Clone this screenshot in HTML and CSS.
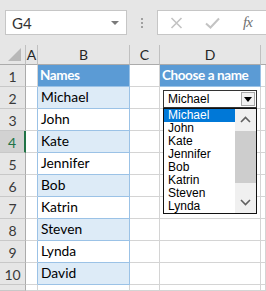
FILE: index.html
```html
<!DOCTYPE html>
<html>
<head>
<title>Choose a name</title>
<link rel="stylesheet" href="styles.css">
</head>
<body>
<div class="toolbar">
	<div class="namebox"><span>G4</span><span class="caret"></span></div>
	<div class="grip"><i></i><i></i><i></i></div>
	<div class="fbar">
		<svg class="ico_x" width="13" height="12" viewBox="0 0 13 12"><path d="M1.5 1 L11.5 11 M11.5 1 L1.5 11" stroke="#c3c3c3" stroke-width="1.6" fill="none"/></svg>
		<svg class="ico_ok" width="15" height="12" viewBox="0 0 15 12"><path d="M1 6.5 L5.5 10.5 L14 1.5" stroke="#c3c3c3" stroke-width="2" fill="none"/></svg>
		<span class="fx">fx</span>
	</div>
</div>

<div class="sheet">
	<div class="hd corner"><span class="tri"></span></div>
	<div class="hd col">A</div>
	<div class="hd col">B</div>
	<div class="hd col">C</div>
	<div class="hd col">D</div>
	<div class="hd col last"></div>

	<div class="hd row">1</div>
	<div class="c"></div>
	<div class="c th">Names</div>
	<div class="c"></div>
	<div class="c th">Choose a name</div>
	<div class="c"></div>

	<div class="hd row">2</div>
	<div class="c ta"></div>
	<div class="c tb even">Michael</div>
	<div class="c"></div>
	<div class="c"></div>
	<div class="c"></div>

	<div class="hd row">3</div>
	<div class="c ta"></div>
	<div class="c tb">John</div>
	<div class="c"></div>
	<div class="c"></div>
	<div class="c"></div>

	<div class="hd row sel">4</div>
	<div class="c ta"></div>
	<div class="c tb even">Kate</div>
	<div class="c"></div>
	<div class="c"></div>
	<div class="c"></div>

	<div class="hd row">5</div>
	<div class="c ta"></div>
	<div class="c tb">Jennifer</div>
	<div class="c"></div>
	<div class="c"></div>
	<div class="c"></div>

	<div class="hd row">6</div>
	<div class="c ta"></div>
	<div class="c tb even">Bob</div>
	<div class="c"></div>
	<div class="c"></div>
	<div class="c"></div>

	<div class="hd row">7</div>
	<div class="c ta"></div>
	<div class="c tb">Katrin</div>
	<div class="c"></div>
	<div class="c"></div>
	<div class="c"></div>

	<div class="hd row">8</div>
	<div class="c ta"></div>
	<div class="c tb even">Steven</div>
	<div class="c"></div>
	<div class="c"></div>
	<div class="c"></div>

	<div class="hd row">9</div>
	<div class="c ta"></div>
	<div class="c tb">Lynda</div>
	<div class="c"></div>
	<div class="c"></div>
	<div class="c"></div>

	<div class="hd row">10</div>
	<div class="c ta"></div>
	<div class="c tb even">David</div>
	<div class="c"></div>
	<div class="c"></div>
	<div class="c"></div>

	<!-- row 11, only its top shows -->
	<div class="hd row"></div>
	<div class="c"></div>
	<div class="c"></div>
	<div class="c"></div>
	<div class="c"></div>
	<div class="c"></div>
</div>

<!-- data validation dropdown, open -->
<div class="combo">
	<span class="combo_txt">Michael</span>
	<span class="combo_btn"><span class="combo_tri"></span></span>
</div>
<div class="dd_list">
	<div class="dd_items">
		<div class="dd_item picked">Michael</div>
		<div class="dd_item">John</div>
		<div class="dd_item">Kate</div>
		<div class="dd_item">Jennifer</div>
		<div class="dd_item">Bob</div>
		<div class="dd_item">Katrin</div>
		<div class="dd_item">Steven</div>
		<div class="dd_item">Lynda</div>
	</div>
	<div class="dd_scroll">
		<div class="sb_btn"><svg width="11" height="7" viewBox="0 0 11 7"><path d="M1 6 L5.5 1.5 L10 6" stroke="#606060" stroke-width="1.6" fill="none"/></svg></div>
		<div class="sb_thumb"></div>
		<div class="sb_track"></div>
		<div class="sb_btn"><svg width="11" height="7" viewBox="0 0 11 7"><path d="M1 1 L5.5 5.5 L10 1" stroke="#606060" stroke-width="1.6" fill="none"/></svg></div>
	</div>
</div>
</body>
</html>
```

FILE: styles.css
```css
body {
	margin: 0;
	width: 266px;
	height: 291px;
	overflow: hidden;
	background: #ffffff;
	position: relative;
	font-family: Lato, "Liberation Sans", sans-serif;
	color: #000000;
}

/* name box + formula bar */
.toolbar {
	height: 45px;
	box-sizing: border-box;
	padding-top: 10px;
	background: #e6e6e6;
	display: flex;
	align-items: flex-start;
}

.namebox {
	margin-left: 5px;
	width: 122px;
	height: 25px;
	box-sizing: border-box;
	background: #ffffff;
	border: 1px solid #c6c6c6;
	display: flex;
	align-items: center;
	justify-content: space-between;
	padding: 0 7px 0 6px;
	font-size: 15px;
	color: #333333;
}

.caret {
	width: 0;
	height: 0;
	border-left: 4px solid transparent;
	border-right: 4px solid transparent;
	border-top: 4px solid #7a7a7a;
}

.grip {
	width: 30px;
	height: 25px;
	display: flex;
	flex-direction: column;
	align-items: center;
	justify-content: center;
	gap: 2px;
}

.grip i {
	display: block;
	width: 2px;
	height: 2px;
	background: #a0a0a0;
}

.fbar {
	flex: 1;
	height: 25px;
	box-sizing: border-box;
	background: #ffffff;
	border: 1px solid #c6c6c6;
	border-right: 0;
	display: flex;
	align-items: center;
}

.ico_x { margin-left: 12px; }
.ico_ok { margin-left: 22px; }

.fx {
	margin-left: 23px;
	font-family: "Liberation Serif", serif;
	font-style: italic;
	font-size: 15px;
	color: #707070;
	letter-spacing: -1px;
}

/* grid */
.sheet {
	display: grid;
	grid-template-columns: 26px 12px 92px 30px 101px 1fr;
	grid-template-rows: 20px repeat(10, 22px) 6px;
	height: 246px;
	overflow: hidden;
}

.sheet > div {
	box-sizing: border-box;
	border-right: 1px solid #d4d4d4;
	border-bottom: 1px solid #d4d4d4;
}

.hd {
	background: #e6e6e6;
	color: #262626;
	font-size: 14px;
	display: flex;
	align-items: center;
	justify-content: center;
}

.sheet > .col,
.sheet > .corner {
	border-right-color: #c0c0c0;
	border-bottom-color: #ababab;
}

.sheet > .col.last { border-right: 0; }

.sheet > .row {
	border-right-color: #ababab;
	border-bottom-color: #c8c8c8;
	color: #3a3a3a;
	padding-top: 2px;
}

.sheet > .row.sel {
	background: #d2d2d2;
	color: #217346;
	border-right: 2px solid #217346;
}

.corner {
	position: relative;
}

.tri {
	position: absolute;
	right: 4px;
	bottom: 3px;
	width: 0;
	height: 0;
	border-left: 13px solid transparent;
	border-bottom: 13px solid #b8b8b8;
}

.c {
	font-size: 13.8px;
	display: flex;
	align-items: flex-end;
	padding: 0 0 2px 3px;
	line-height: 18px;
	white-space: nowrap;
}

.sheet > .th {
	background: #5b9bd5;
	color: #ffffff;
	font-weight: bold;
	font-size: 13.5px;
	letter-spacing: -0.4px;
	border-right-color: #9bc2e6;
	border-bottom-color: #9bc2e6;
	padding-left: 2px;
}

.sheet > .ta { border-right-color: #9bc2e6; }

.sheet > .tb {
	border-right-color: #9bc2e6;
	border-bottom-color: #9bc2e6;
}

.sheet > .tb.even { background: #ddebf7; }

/* dropdown */
.combo {
	position: absolute;
	left: 163px;
	top: 90px;
	width: 94px;
	height: 18px;
	box-sizing: border-box;
	border: 1px solid #333333;
	background: #ffffff;
	display: flex;
	align-items: center;
	font-family: "Liberation Sans", sans-serif;
	font-size: 12px;
}

.combo_txt {
	flex: 1;
	padding-left: 4px;
}

.combo_btn {
	width: 14px;
	height: 14px;
	margin-right: 1px;
	box-sizing: border-box;
	border: 1px solid #a8a8a8;
	background: #f2f2f2;
	display: flex;
	align-items: center;
	justify-content: center;
}

.combo_tri {
	width: 0;
	height: 0;
	border-left: 4px solid transparent;
	border-right: 4px solid transparent;
	border-top: 5px solid #000000;
}

.dd_list {
	position: absolute;
	left: 163px;
	top: 108px;
	width: 94px;
	height: 106px;
	box-sizing: border-box;
	border: 1px solid #111111;
	background: #ffffff;
	display: flex;
}

.dd_items {
	flex: 1;
	font-family: "Liberation Sans", sans-serif;
	font-size: 12px;
	line-height: 13px;
}

.dd_item {
	padding-left: 4px;
	height: 13px;
	color: #000000;
}

.dd_item.picked {
	background: #0078d7;
	color: #ffffff;
}

.dd_scroll {
	width: 21px;
	background: #f0f0f0;
	display: flex;
	flex-direction: column;
}

.sb_btn {
	height: 21px;
	display: flex;
	align-items: center;
	justify-content: center;
}

.sb_thumb {
	height: 52px;
	margin-top: 1px;
	background: #cdcdcd;
}

.sb_track { flex: 1; }
```
